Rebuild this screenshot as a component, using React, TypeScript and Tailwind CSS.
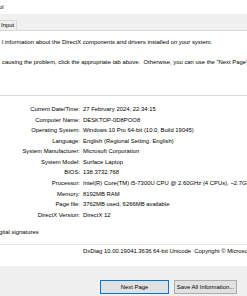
import React from "react";

const rows: [string, string][] = [
  ["Current Date/Time:", "27 February 2024, 22:34:15"],
  ["Computer Name:", "DESKTOP-0D8POO8"],
  ["Operating System:", "Windows 10 Pro 64-bit (10.0, Build 19045)"],
  ["Language:", "English (Regional Setting: English)"],
  ["System Manufacturer:", "Microsoft Corporation"],
  ["System Model:", "Surface Laptop"],
  ["BIOS:", "138.3732.768"],
  ["Processor:", "Intel(R) Core(TM) i5-7300U CPU @ 2.60GHz (4 CPUs), ~2.7GHz"],
  ["Memory:", "8192MB RAM"],
  ["Page file:", "3762MB used, 6266MB available"],
  ["DirectX Version:", "DirectX 12"],
];

export default function App() {
  return (
    <div
      className="w-[247px] h-[296px] overflow-hidden bg-[#f0f0f0] text-[5.9px] text-black whitespace-nowrap"
      style={{ fontFamily: '"Liberation Sans", Arial, sans-serif' }}
    >
      <div className="h-[14px] bg-white leading-[14px] -ml-[1px]">ol</div>
      <div className="h-[16px] flex items-end">
        <div className="h-[10px] w-[17px] border-t border-r border-[#d9d9d9] bg-[#f0f0f0] leading-[9px] pl-[1px]">
          Input
        </div>
      </div>
      <div className="h-[236px] bg-white border-t border-[#d9d9d9] flex flex-col">
        <div className="mt-[6px] h-[10px] leading-[10px] pl-[2px]">
          l information about the DirectX components and drivers installed on your system.
        </div>
        <div className="mt-[10px] h-[10px] leading-[10px] pl-[2px]">
          causing the problem, click the appropriate tab above.&nbsp; Otherwise, you can use the "Next Page"
        </div>
        <div className="mt-[28px] border-t border-[#dcdcdc]" />
        <div className="mt-[8px] flex flex-col">
          {rows.map(([k, v]) => (
            <div key={k} className="h-[10.57px] leading-[10.57px] flex">
              <div className="w-[80px] text-right shrink-0">{k}</div>
              <div className="pl-[3px]">{v}</div>
            </div>
          ))}
        </div>
        <div className="mt-[6.7px] h-[10px] leading-[10px] -ml-[1px]">gital signatures</div>
        <div className="mt-[7px] border-t border-[#e3e3e3]" />
        <div className="mt-[1px] h-[10px] leading-[10px] pl-[83px]">
          DxDiag 10.00.19041.3636 64-bit Unicode&nbsp; Copyright © Microsoft.
        </div>
      </div>
      <div className="mt-[14px] flex h-[14px]">
        <div className="ml-[100px] w-[69px] h-[14px] border border-[#0078d7] bg-[#e1e1e1] flex items-center justify-center">
          Next Page
        </div>
        <div className="ml-[5px] w-[63px] h-[14px] border border-[#adadad] bg-[#e1e1e1] flex items-center justify-center">
          Save All Information...
        </div>
      </div>
    </div>
  );
}
